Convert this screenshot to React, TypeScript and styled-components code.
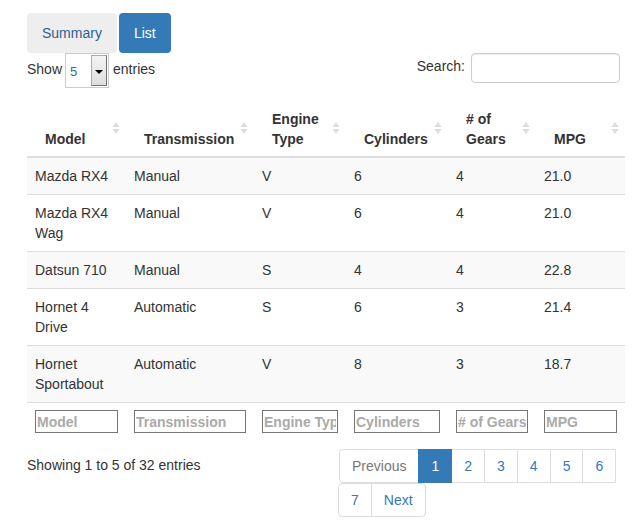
import React from "react";
import styled, { createGlobalStyle } from "styled-components";

const Global = createGlobalStyle`
  html, body { margin: 0; padding: 0; background: #fff; }
  body {
    font-family: "Liberation Sans", Arial, sans-serif;
    font-size: 14px;
    line-height: 20px;
    color: #333;
  }
  * { box-sizing: border-box; }
`;

const Page = styled.div`
  padding: 13px 0 0 27px;
  width: 625px;
`;

const Tabs = styled.div`
  display: flex;
  gap: 2px;
`;

const Tab = styled.div<{ $active?: boolean }>`
  padding: 10px 15px;
  height: 40px;
  border-radius: 4px;
  background: ${(p) => (p.$active ? "#337ab7" : "#eee")};
  color: ${(p) => (p.$active ? "#fff" : "#2f5f8f")};
`;

const Controls = styled.div`
  display: flex;
  justify-content: space-between;
  align-items: flex-start;
  height: 35px;
`;

const Length = styled.div`
  display: flex;
  align-items: flex-start;
  gap: 4px;
  padding-top: 1px;
  & > span { padding-top: 5px; }
`;

const SelectBox = styled.div`
  width: 44px;
  height: 35px;
  border: 1px solid #ccc;
  display: flex;
  align-items: stretch;
  background: #fff;
  margin-top: -1px;
  margin-left: -1px;
`;

const SelectValue = styled.span`
  flex: 1;
  color: #2a6db0;
  font-size: 13px;
  padding: 8px 0 0 4px !important;
`;

const SelectButton = styled.div`
  width: 16px;
  margin: 1px 1px 1px 0;
  background: linear-gradient(#f4f4f4, #dedede);
  border: 1px solid #ababab;
  border-right-color: #707070;
  border-bottom-color: #707070;
  display: flex;
  align-items: center;
  justify-content: center;
`;

const Caret = styled.div`
  width: 0;
  height: 0;
  border-left: 4px solid transparent;
  border-right: 4px solid transparent;
  border-top: 4px solid #000;
  margin-top: 2px;
`;

const SearchWrap = styled.label`
  display: flex;
  align-items: flex-start;
  gap: 6px;
  margin-right: 5px;
  & > span { padding-top: 3px; }
`;

const SearchInput = styled.div`
  width: 149px;
  height: 30px;
  border: 1px solid #ccc;
  border-radius: 4px;
  box-shadow: inset 0 1px 1px rgba(0, 0, 0, 0.075);
`;

const Table = styled.table`
  margin-top: 9px;
  width: 598px;
  border-collapse: collapse;
  table-layout: fixed;
`;

const Th = styled.th`
  position: relative;
  text-align: left;
  vertical-align: bottom;
  font-weight: bold;
  padding: 12px 30px 7px 18px;
  border-bottom: 2px solid #ddd;
`;

const SortIcon = styled.svg`
  position: absolute;
  right: 6px;
  top: 50%;
  margin-top: -6px;
`;

const Tr = styled.tr<{ $odd?: boolean }>`
  background: ${(p) => (p.$odd ? "#f9f9f9" : "#fff")};
`;

const Td = styled.td`
  padding: 8px;
  vertical-align: top;
  border-top: 1px solid #ddd;
`;

const FootTh = styled.th`
  padding: 7px 8px 8px;
  border-top: 1px solid #ddd;
  text-align: left;
`;

const FilterInput = styled.input`
  width: 100%;
  height: 23px;
  border: 1px solid #767676;
  border-radius: 0;
  padding: 1px 1px;
  font-family: "Liberation Sans", Arial, sans-serif;
  font-size: 14px;
  font-weight: bold;
  color: #333;
  outline: none;
  &::placeholder { color: #aaa; opacity: 1; }
`;

const Bottom = styled.div`
  display: flex;
  justify-content: space-between;
  align-items: flex-start;
  margin-top: 6px;
  width: 598px;
`;

const Info = styled.div`
  padding-top: 8px;
`;

const Pager = styled.div`
  display: flex;
  flex-wrap: wrap;
  width: 287px;
  margin-top: 2px;
  margin-right: -1px;
`;

const PageLink = styled.span<{ $active?: boolean; $disabled?: boolean; $first?: boolean; $last?: boolean }>`
  padding: 6px 12px;
  margin-left: -1px;
  border: 1px solid ${(p) => (p.$active ? "#337ab7" : "#ddd")};
  background: ${(p) => (p.$active ? "#337ab7" : "#fff")};
  color: ${(p) => (p.$active ? "#fff" : p.$disabled ? "#777" : "#337ab7")};
  position: relative;
  z-index: ${(p) => (p.$active ? 2 : 0)};
  border-radius: ${(p) => (p.$first ? "4px 0 0 4px" : p.$last ? "0 4px 4px 0" : "0")};
  &:first-child { margin-left: 0; }
`;

const cols = [
  { label: ["Model"], w: 99 },
  { label: ["Transmission"], w: 128 },
  { label: ["Engine", "Type"], w: 92 },
  { label: ["Cylinders"], w: 102 },
  { label: ["# of", "Gears"], w: 88 },
  { label: ["MPG"], w: 89 },
];

const rows = [
  ["Mazda RX4", "Manual", "V", "6", "4", "21.0"],
  ["Mazda RX4 Wag", "Manual", "V", "6", "4", "21.0"],
  ["Datsun 710", "Manual", "S", "4", "4", "22.8"],
  ["Hornet 4 Drive", "Automatic", "S", "6", "3", "21.4"],
  ["Hornet Sportabout", "Automatic", "V", "8", "3", "18.7"],
];

const filters = ["Model", "Transmission", "Engine Type", "Cylinders", "# of Gears", "MPG"];

const Sort = () => (
  <SortIcon width="8" height="14" viewBox="0 0 8 14">
    <polygon points="4,1 7.5,6 0.5,6" fill="#ddd" />
    <polygon points="0.5,8 7.5,8 4,13" fill="#ddd" />
  </SortIcon>
);

export default function App() {
  return (
    <>
      <Global />
      <Page>
        <Tabs>
          <Tab>Summary</Tab>
          <Tab $active>List</Tab>
        </Tabs>
        <Controls>
          <Length>
            <span>Show</span>
            <SelectBox>
              <SelectValue>5</SelectValue>
              <SelectButton>
                <Caret />
              </SelectButton>
            </SelectBox>
            <span>entries</span>
          </Length>
          <SearchWrap>
            <span>Search:</span>
            <SearchInput />
          </SearchWrap>
        </Controls>
        <Table>
          <colgroup>
            {cols.map((c, i) => (
              <col key={i} style={{ width: c.w }} />
            ))}
          </colgroup>
          <thead>
            <tr>
              {cols.map((c, i) => (
                <Th key={i}>
                  {c.label.map((l, j) => (
                    <React.Fragment key={j}>
                      {j > 0 && <br />}
                      {l}
                    </React.Fragment>
                  ))}
                  <Sort />
                </Th>
              ))}
            </tr>
          </thead>
          <tbody>
            {rows.map((r, i) => (
              <Tr key={i} $odd={i % 2 === 0}>
                {r.map((v, j) => (
                  <Td key={j}>{v}</Td>
                ))}
              </Tr>
            ))}
          </tbody>
          <tfoot>
            <tr>
              {filters.map((f, i) => (
                <FootTh key={i}>
                  <FilterInput placeholder={f} />
                </FootTh>
              ))}
            </tr>
          </tfoot>
        </Table>
        <Bottom>
          <Info>Showing 1 to 5 of 32 entries</Info>
          <Pager>
            <PageLink $first $disabled>Previous</PageLink>
            <PageLink $active>1</PageLink>
            <PageLink>2</PageLink>
            <PageLink>3</PageLink>
            <PageLink>4</PageLink>
            <PageLink>5</PageLink>
            <PageLink>6</PageLink>
            <PageLink $first>7</PageLink>
            <PageLink $last>Next</PageLink>
          </Pager>
        </Bottom>
      </Page>
    </>
  );
}
